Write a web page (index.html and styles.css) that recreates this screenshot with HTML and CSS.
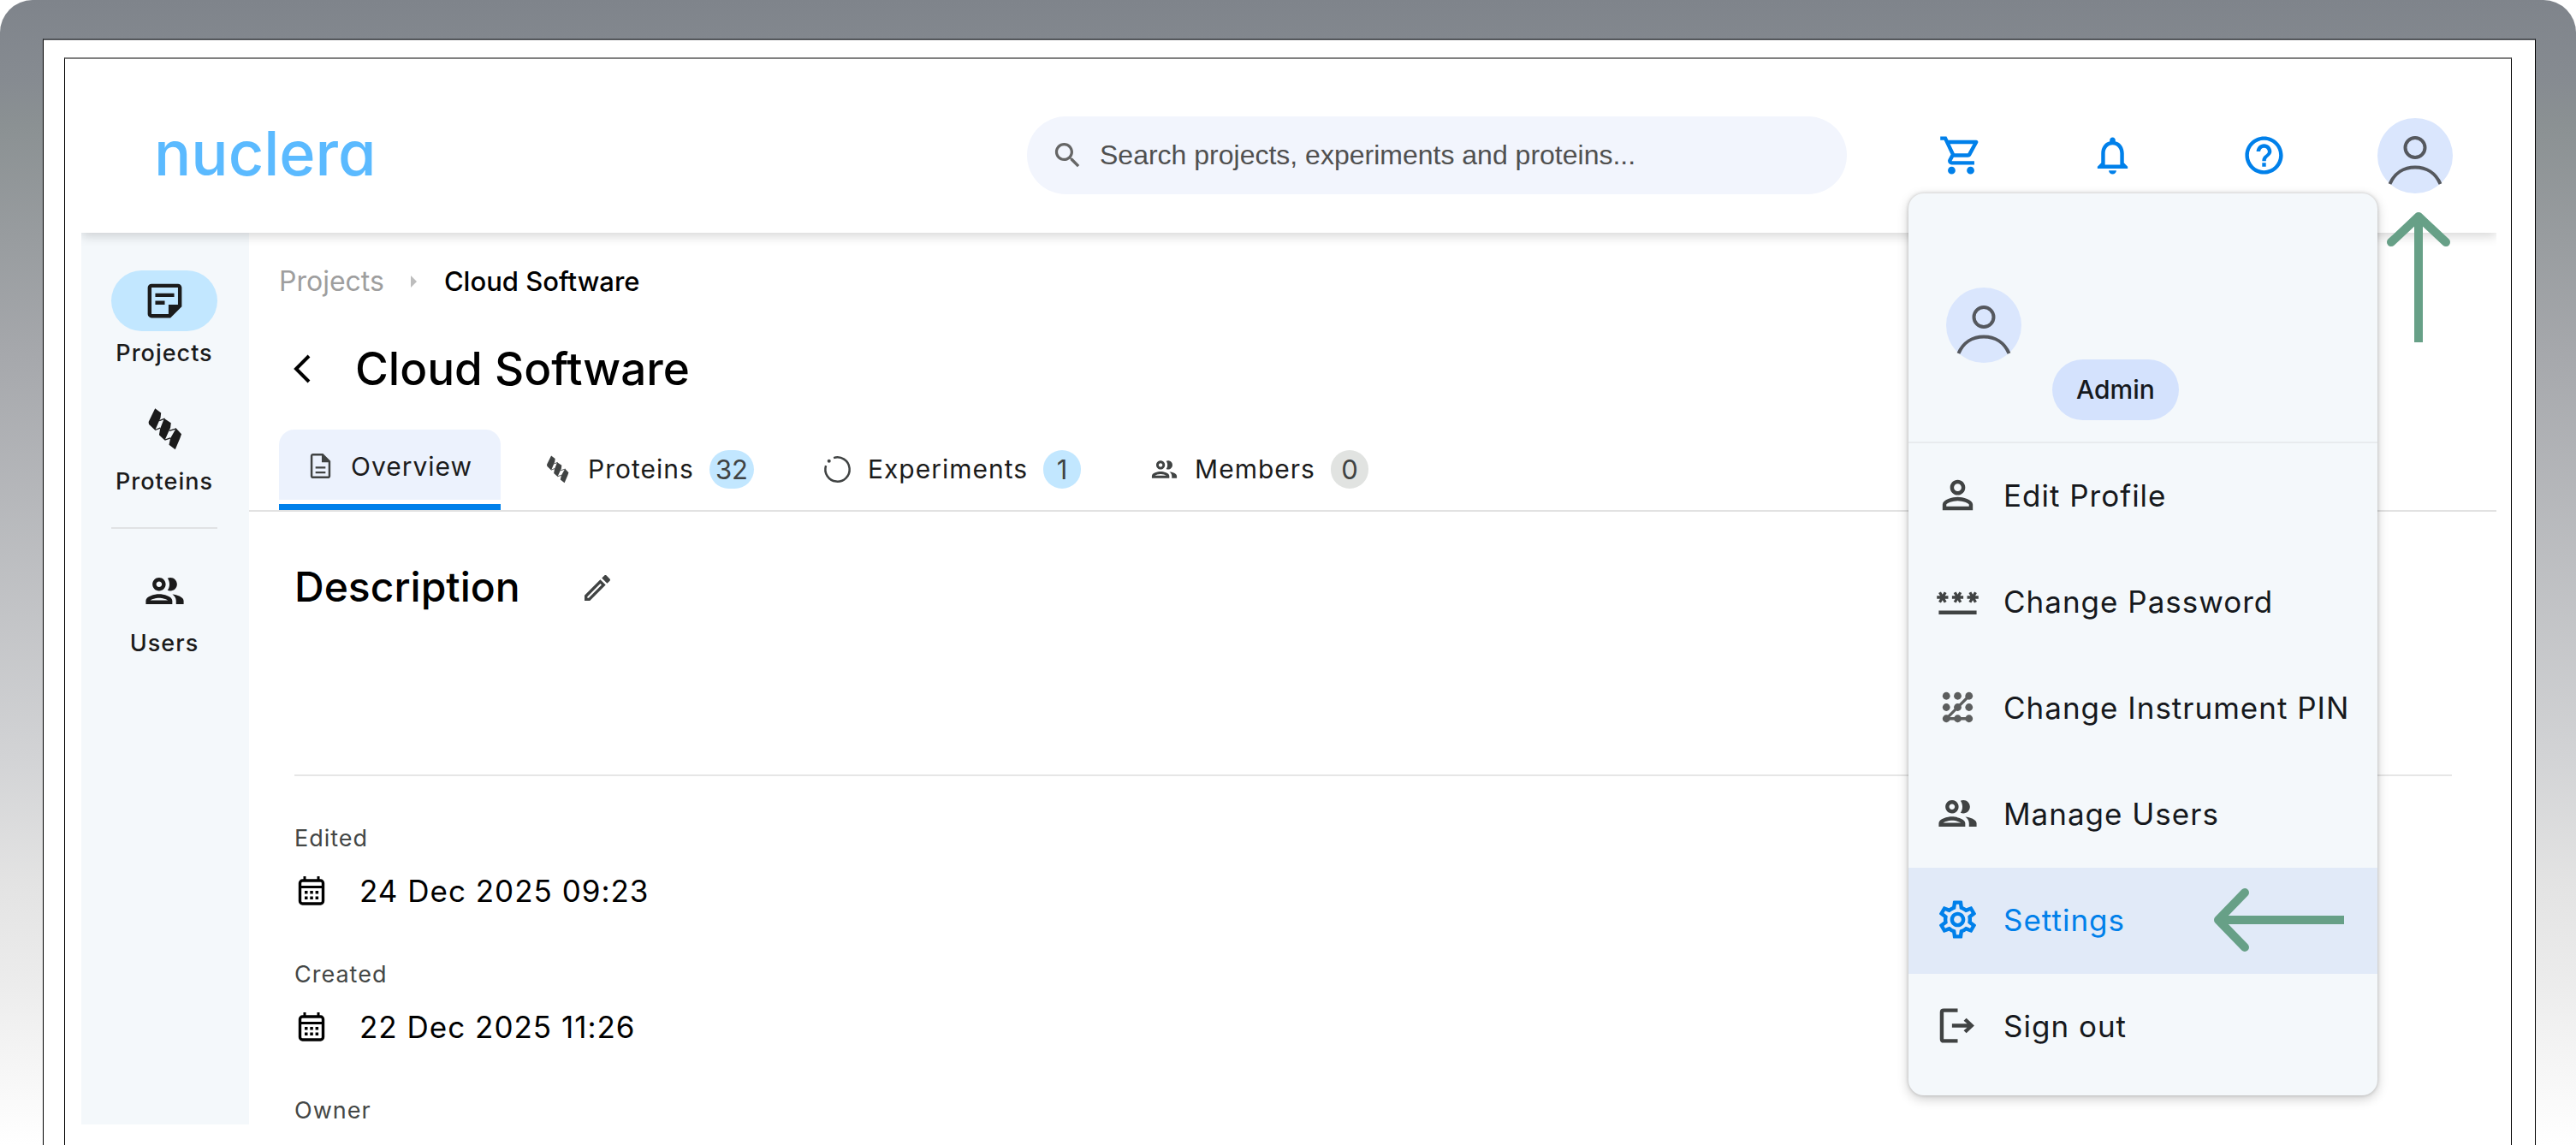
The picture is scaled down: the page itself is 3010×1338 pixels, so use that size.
FILE: index.html
```html
<!DOCTYPE html>
<html lang="en">
<head>
  <meta charset="UTF-8">
  <title>Cloud Software - nuclera</title>
  <link rel="stylesheet" href="styles.css">
</head>
<body>
  <!-- shared icons -->
  <svg class="sprite" aria-hidden="true">
    <symbol id="icon-group" viewBox="0 0 24 24"><path d="M9 13.75c-2.34 0-7 1.17-7 3.5V19h14v-1.75c0-2.33-4.66-3.5-7-3.5zM4.34 17c.84-.58 2.87-1.25 4.66-1.25s3.82.67 4.66 1.25H4.34zM9 12c1.93 0 3.5-1.57 3.5-3.5S10.93 5 9 5 5.5 6.57 5.5 8.5 7.07 12 9 12zm0-5c.83 0 1.5.67 1.5 1.5S9.83 10 9 10s-1.5-.67-1.5-1.5S8.17 7 9 7zm7.04 6.81c1.16.84 1.96 1.96 1.96 3.44V19h4v-1.75c0-2.02-3.5-3.17-5.96-3.44zM15 12c1.93 0 3.5-1.57 3.5-3.5S16.93 5 15 5c-.54 0-1.04.13-1.5.35.63.89 1 1.98 1 3.15s-.37 2.26-1 3.15c.46.22.96.35 1.5.35z"/></symbol>
    <symbol id="icon-protein" viewBox="0 0 132 160">
      <path d="M32 7L53 23L51 40L32 84L10 63L9 54ZM64 42L88 58L86 75L66 119L46 100L50 78ZM106 77L125 97L120 112L103 152L81 135L86 112Z"/>
      <path d="M47 50L66 43M32 83L50 76M82 86L107 78M66 118L86 111" fill="none" stroke="currentColor" stroke-width="4"/>
    </symbol>
    <symbol id="icon-calendar" viewBox="0 0 40 40">
      <rect x="6.500" y="8" width="27" height="27" rx="3" fill="none" stroke="currentColor" stroke-width="3.400"/>
      <path d="M6 15.500h28M12 3v5M28 3v5" fill="none" stroke="currentColor" stroke-width="3"/>
      <path d="M12 20h3.500v3.500H12zM18.300 20h3.500v3.500h-3.500zM24.600 20h3.500v3.500h-3.500zM12 26.500h3.500V30H12zM18.300 26.500h3.500V30h-3.500zM24.600 26.500h3.500V30h-3.500z"/>
    </symbol>
    <symbol id="icon-avatar" viewBox="0 0 88 88">
      <circle cx="44" cy="34.500" r="11.500" fill="none" stroke="currentColor" stroke-width="4"/>
      <path d="M14.500 77C20 64 31 57.500 44 57.500S68 64 73.500 77" fill="none" stroke="currentColor" stroke-width="4"/>
    </symbol>
  </svg>

  <div class="device">
    <div class="bezel">
      <div class="app">
        <header class="topbar">
          <a class="logo" href="#">nuclera</a>
          <label class="search">
            <svg class="icon-search" viewBox="0 0 24 24"><path d="M15.5 14h-.79l-.28-.27C15.41 12.59 16 11.11 16 9.5 16 5.91 13.09 3 9.500 3S3 5.910 3 9.500 5.910 16 9.500 16c1.610 0 3.090-.59 4.230-1.570l.27.28v.79l5 4.990L20.490 19l-4.990-5zm-6 0C7.010 14 5 11.990 5 9.500S7.010 5 9.500 5 14 7.010 14 9.500 11.990 14 9.500 14z"/></svg>
            <input type="search" aria-label="Search" placeholder="Search projects, experiments and proteins...">
          </label>
          <button type="button" class="top-button" aria-label="Cart">
            <svg class="icon" viewBox="0 0 24 24"><path d="M15.55 13c.75 0 1.410-.41 1.750-1.030l3.580-6.490c.37-.66-.11-1.480-.87-1.480H5.210l-.94-2H1v2h2l3.600 7.590-1.350 2.440C4.520 15.370 5.480 17 7 17h12v-2H7l1.100-2h7.450zM6.160 6h12.150l-2.760 5H8.530L6.160 6zM7 18c-1.100 0-1.990.9-1.990 2S5.900 22 7 22s2-.9 2-2-.9-2-2-2zm10 0c-1.100 0-1.990.9-1.990 2s.89 2 1.990 2 2-.9 2-2-.9-2-2-2z"/></svg>
          </button>
          <button type="button" class="top-button" aria-label="Notifications">
            <svg class="icon" viewBox="0 0 24 24"><path d="M12 22c1.100 0 2-.9 2-2h-4c0 1.100.9 2 2 2zm6-6v-5c0-3.070-1.630-5.640-4.500-6.320V4c0-.83-.67-1.500-1.500-1.500s-1.500.67-1.500 1.500v.68C7.640 5.360 6 7.920 6 11v5l-2 2v1h16v-1l-2-2zm-2 1H8v-6c0-2.480 1.510-4.500 4-4.500s4 2.020 4 4.500v6z"/></svg>
          </button>
          <button type="button" class="top-button" aria-label="Help">
            <svg class="icon" viewBox="0 0 24 24"><path d="M11 18h2v-2h-2v2zm1-16C6.480 2 2 6.480 2 12s4.480 10 10 10 10-4.480 10-10S17.520 2 12 2zm0 18c-4.410 0-8-3.590-8-8s3.590-8 8-8 8 3.590 8 8-3.590 8-8 8zm0-14c-2.210 0-4 1.790-4 4h2c0-1.100.9-2 2-2s2 .9 2 2c0 2-3 1.750-3 5h2c0-2.250 3-2.500 3-5 0-2.210-1.790-4-4-4z"/></svg>
          </button>
          <div class="account">
            <button type="button" class="avatar" aria-label="Account"><svg><use href="#icon-avatar"/></svg></button>
            <svg class="arrow-up" viewBox="0 0 80 156"><path d="M40 10v144" stroke-width="10"/><path d="M8 37L40 7L72 37" stroke-width="10" stroke-linecap="round" stroke-linejoin="round"/></svg>

            <div class="menu">
              <div class="menu-head">
                <span class="avatar"><svg><use href="#icon-avatar"/></svg></span>
                <span class="role">Admin</span>
              </div>
              <a class="menu-item" href="#">
                <svg class="icon" viewBox="0 0 24 24"><path fill-rule="evenodd" d="M12 6c1.100 0 2 .9 2 2s-.9 2-2 2-2-.9-2-2 .9-2 2-2m0 9c2.700 0 5.800 1.290 6 2v1H6v-.99c.2-.72 3.300-2.010 6-2.010m0-11C9.790 4 8 5.790 8 8s1.790 4 4 4 4-1.790 4-4-1.790-4-4-4zm0 9c-2.670 0-8 1.340-8 4v3h16v-3c0-2.660-5.330-4-8-4z"/></svg>
                Edit Profile
              </a>
              <a class="menu-item" href="#">
                <svg class="icon" viewBox="0 0 24 24"><path d="M2 17h20v2H2v-2zm1.150-4.050L4 11.470l.85 1.480 1.300-.75-.85-1.480H7v-1.500H5.300l.85-1.470L4.850 7 4 8.470 3.150 7l-1.300.75.85 1.470H1v1.500h1.700l-.85 1.480 1.300.75zm6.700-.75l1.300.75.85-1.480.85 1.480 1.300-.75-.85-1.480H15v-1.500h-1.700l.85-1.470-1.300-.75L12 8.470 11.150 7l-1.300.75.85 1.470H9v1.500h1.700l-.85 1.480zM23 9.220h-1.700l.85-1.470-1.300-.75L20 8.470 19.150 7l-1.300.75.85 1.470H17v1.500h1.700l-.85 1.480 1.300.75.85-1.480.85 1.480 1.300-.75-.85-1.480H23v-1.500z"/></svg>
                Change Password
              </a>
              <a class="menu-item" href="#">
                <svg class="icon icon-pin" viewBox="0 0 24 24"><circle cx="6" cy="6" r="2"/><circle cx="12" cy="6" r="2"/><circle cx="18" cy="6" r="2"/><circle cx="6" cy="12" r="2"/><circle cx="12" cy="12" r="2"/><circle cx="18" cy="12" r="2"/><circle cx="6" cy="18" r="2"/><circle cx="12" cy="18" r="2"/><circle cx="18" cy="18" r="2"/><path d="M18 6L6 18h12" fill="none" stroke="currentColor" stroke-width="1.500"/></svg>
                Change Instrument PIN
              </a>
              <a class="menu-item" href="#">
                <svg class="icon"><use href="#icon-group"/></svg>
                Manage Users
              </a>
              <a class="menu-item active" href="#">
                <svg class="icon" viewBox="0 0 24 24"><path d="M19.43 12.98c.04-.32.07-.64.07-.98 0-.34-.03-.66-.07-.98l2.11-1.65c.19-.15.24-.42.12-.64l-2-3.46c-.09-.16-.26-.25-.44-.25-.06 0-.12.01-.17.03l-2.49 1c-.52-.4-1.08-.73-1.69-.98l-.38-2.65C14.46 2.18 14.25 2 14 2h-4c-.25 0-.46.18-.49.42l-.38 2.65c-.61.25-1.17.59-1.69.98l-2.49-1c-.06-.02-.12-.03-.18-.03-.17 0-.34.09-.43.25l-2 3.46c-.13.22-.07.49.12.64l2.11 1.65c-.04.32-.07.65-.07.98 0 .33.03.66.07.98l-2.11 1.65c-.19.15-.24.42-.12.64l2 3.46c.09.16.26.25.44.25.06 0 .12-.01.17-.03l2.49-1c.52.4 1.08.73 1.69.98l.38 2.65c.03.24.24.42.49.42h4c.25 0 .46-.18.49-.42l.38-2.65c.61-.25 1.17-.59 1.69-.98l2.49 1c.06.02.12.03.18.03.17 0 .34-.09.43-.25l2-3.46c.12-.22.07-.49-.12-.64l-2.11-1.65zm-1.98-1.71c.04.31.05.52.05.73 0 .21-.02.43-.05.73l-.14 1.13.89.7 1.08.84-.7 1.21-1.27-.51-1.04-.42-.9.68c-.43.32-.84.56-1.25.73l-1.06.43-.16 1.13-.2 1.35h-1.4l-.19-1.35-.16-1.13-1.06-.43c-.43-.18-.83-.41-1.23-.71l-.91-.7-1.06.43-1.27.51-.7-1.21 1.08-.84.89-.7-.14-1.13c-.03-.31-.05-.54-.05-.74s.02-.43.05-.73l.14-1.13-.89-.7-1.08-.84.7-1.21 1.27.51 1.04.42.9-.68c.43-.32.84-.56 1.25-.73l1.06-.43.16-1.13.2-1.35h1.39l.19 1.35.16 1.13 1.06.43c.43.18.83.41 1.23.71l.91.7 1.06-.43 1.27-.51.7 1.21-1.07.85-.89.7.14 1.13zM12 8c-2.21 0-4 1.79-4 4s1.79 4 4 4 4-1.79 4-4-1.79-4-4-4zm0 6c-1.1 0-2-.9-2-2s.9-2 2-2 2 .9 2 2-.9 2-2 2z"/></svg>
                Settings
                <svg class="arrow-left" viewBox="0 0 156 80"><path d="M10 40h144" stroke-width="10"/><path d="M38 8L7 40L38 72" stroke-width="10" stroke-linecap="round" stroke-linejoin="round"/></svg>
              </a>
              <a class="menu-item" href="#">
                <svg class="icon" viewBox="0 0 24 24"><path d="M12 3.900H4.600q-1 0-1 1v14.200q0 1 1 1H12" fill="none" stroke="currentColor" stroke-width="2"/><path d="M16.600 8l-1.400 1.400L17 11H9v2h8l-1.800 1.600 1.400 1.400 4.200-4z"/></svg>
                Sign out
              </a>
            </div>
          </div>
        </header>

        <div class="body">
          <nav class="sidebar">
            <a class="nav-item active" href="#">
              <span class="nav-icon"><svg class="icon" viewBox="0 0 24 24"><path d="M19 5v9h-5v5H5V5h14m0-2H5c-1.100 0-2 .9-2 2v14c0 1.100.9 2 2 2h10l6-6V5c0-1.100-.9-2-2-2zm-7 11H7v-2h5v2zm5-4H7V8h10v2z"/></svg></span>
              Projects
            </a>
            <a class="nav-item" href="#">
              <span class="nav-icon"><svg class="icon"><use href="#icon-protein"/></svg></span>
              Proteins
            </a>
            <hr class="nav-line">
            <a class="nav-item" href="#">
              <span class="nav-icon"><svg class="icon"><use href="#icon-group"/></svg></span>
              Users
            </a>
          </nav>

          <main class="main">
            <div class="breadcrumb">
              <a href="#">Projects</a>
              <svg class="crumb-arrow" viewBox="0 0 8 14"><path d="M0 0l7 7-7 7z"/></svg>
              <span>Cloud Software</span>
            </div>

            <div class="title-row">
              <button type="button" class="back" aria-label="Back"><svg viewBox="0 0 20 34"><path d="M18 2L3 17L18 32" fill="none" stroke="currentColor" stroke-width="4"/></svg></button>
              <h1>Cloud Software</h1>
            </div>

            <div class="tabs">
              <button type="button" class="tab active">
                <svg class="tab-icon" viewBox="0 0 24 24"><path d="M8 16.500h8V18H8zm0-4h8V14H8zM14 2H6c-1.100 0-2 .9-2 2v16c0 1.100.89 2 1.990 2H18c1.100 0 2-.9 2-2V8l-6-6zm4.300 18.300H5.700V3.700H13V9h5.300v11.300z"/></svg>
                Overview
              </button>
              <button type="button" class="tab">
                <svg class="tab-icon"><use href="#icon-protein"/></svg>
                Proteins <span class="badge">32</span>
              </button>
              <button type="button" class="tab">
                <svg class="tab-icon" viewBox="0 0 24 24"><path d="M9 2.800A9.700 9.700 0 1 1 2.800 9" fill="none" stroke="currentColor" stroke-width="1.700"/><circle cx="5.300" cy="5.300" r="1.400"/></svg>
                Experiments <span class="badge">1</span>
              </button>
              <button type="button" class="tab">
                <svg class="tab-icon"><use href="#icon-group"/></svg>
                Members <span class="badge empty">0</span>
              </button>
            </div>

            <section class="overview">
              <div class="description">
                <h2>Description</h2>
                <button type="button" class="edit" aria-label="Edit description"><svg viewBox="0 0 24 24"><path d="M14.060 9.020l.92.92L5.920 19H5v-.92l9.060-9.060M17.660 3c-.25 0-.51.1-.7.29l-1.830 1.830 3.750 3.750 1.830-1.830c.39-.39.39-1.020 0-1.410l-2.340-2.340c-.2-.2-.45-.29-.71-.29zm-3.600 3.190L3 17.250V21h3.750L17.810 9.940l-3.750-3.750z"/></svg></button>
              </div>
              <dl class="details">
                <div class="detail">
                  <dt>Edited</dt>
                  <dd><svg class="calendar"><use href="#icon-calendar"/></svg>24 Dec 2025 09:23</dd>
                </div>
                <div class="detail">
                  <dt>Created</dt>
                  <dd><svg class="calendar"><use href="#icon-calendar"/></svg>22 Dec 2025 11:26</dd>
                </div>
                <div class="detail">
                  <dt>Owner</dt>
                </div>
              </dl>
            </section>
          </main>
        </div>
      </div>
    </div>
  </div>
</body>
</html>
```

FILE: styles.css
```css
* {
  box-sizing: border-box;
}
body {
  margin: 0;
  background: #fff;
  color: #000;
  font-family: Inter, "Liberation Sans", sans-serif;
  font-size: 31px;
  font-optical-sizing: none;
}
svg {
  display: block;
  fill: currentColor;
  flex-shrink: 0;
}
a {
  color: inherit;
  text-decoration: none;
}
button {
  padding: 0;
  border: none;
  background: none;
  color: inherit;
  font: inherit;
  letter-spacing: inherit;
  cursor: pointer;
}
h1, h2, dl, dd {
  margin: 0;
}
.sprite {
  display: none;
}

/* device frame */
.device {
  display: flex;
  min-height: 100vh;
  padding: 45px 47px 0 50px;
  border-radius: 38px 38px 0 0;
  background: linear-gradient(#7f848b 0%, #868b91 7%, #8b9193 11%, #a6a8ac 31%, #d2d3d5 66%, #e3e3e3 77%, #ececec 86%, #fff 100%);
}
.bezel {
  display: flex;
  flex: 1;
  padding: 20px 27px 0 24px;
  background: #fff;
  border: 1px solid #000;
  border-top: 2px solid #55585c;
  border-bottom: none;
}
.app {
  display: flex;
  flex: 1;
  flex-direction: column;
  padding: 0 17px 24px 19px;
  border: 1px solid #000;
  border-top: 2px solid #808080;
  border-bottom: none;
}

/* top bar */
.topbar {
  display: flex;
  align-items: center;
  gap: 89px;
  position: relative;
  z-index: 1;
  height: 203px;
  padding: 22px 51px 0 85px;
  background: #fff;
  box-shadow: 0 4px 12px rgba(0, 0, 0, 0.16);
  clip-path: inset(0 0 -1200px 0);
}
.logo {
  margin-right: auto;
  padding-bottom: 6px;
  color: #5bbaff;
  font-size: 72px;
  font-weight: 500;
  line-height: 88px;
  font-feature-settings: "cv11";
}
.search {
  display: flex;
  flex: 0 1 958px;
  align-items: center;
  gap: 18px;
  height: 91px;
  padding: 0 28px;
  border-radius: 46px;
  background: #f2f5fd;
}
.icon-search {
  width: 39px;
  height: 39px;
  color: #666;
}
.search input {
  flex: 1;
  min-width: 0;
  padding: 0;
  border: none;
  outline: none;
  background: none;
  color: #444;
  font-family: "Liberation Sans", Arial, sans-serif;
  font-size: 32px;
}
.search input::placeholder {
  color: #505050;
  opacity: 1;
}
.top-button {
  display: flex;
  justify-content: center;
  width: 88px;
  color: #0080ea;
}
.icon {
  width: 53px;
  height: 53px;
}
.account {
  position: relative;
}
.avatar {
  display: block;
  width: 88px;
  height: 88px;
  border-radius: 50%;
  background: #dae6fd;
  color: #55585e;
}
.avatar svg {
  width: 88px;
  height: 88px;
}
.arrow-up, .arrow-left {
  fill: none;
  stroke: #67a087;
}
.arrow-up {
  position: absolute;
  top: 108px;
  left: 8px;
  width: 80px;
  height: 156px;
}
.arrow-left {
  width: 156px;
  height: 80px;
  margin-left: auto;
}

/* account menu */
.menu {
  position: absolute;
  top: 88px;
  right: 88px;
  width: 548px;
  padding-bottom: 18px;
  border-radius: 18px;
  background: #f4f8fb;
  box-shadow: 0 4px 14px rgba(0, 0, 0, 0.2), 0 0 4px rgba(0, 0, 0, 0.2);
}
.menu-head {
  display: flex;
  gap: 36px;
  height: 292px;
  padding: 110px 44px 0;
  border-bottom: 2px solid #e8ebee;
}
.role {
  align-self: flex-end;
  margin-bottom: 25px;
  padding: 0 28px;
  border-radius: 36px;
  background: #d4e2fd;
  color: #16191d;
  font-size: 30px;
  font-weight: 500;
  line-height: 71px;
}
.menu-item {
  display: flex;
  align-items: center;
  gap: 27px;
  height: 124px;
  padding: 0 37px 2px 31px;
  color: #16191d;
  font-size: 35px;
  white-space: nowrap;
  letter-spacing: 1px;
}
.menu-item .icon {
  color: #404343;
}
.menu-item .icon-pin {
  color: #5c5e5e;
}
.menu-item.active {
  background: #e1eaf8;
  color: #0080ea;
}
.menu-item.active .icon {
  color: #0080ea;
}

/* side navigation */
.body {
  display: flex;
  flex: 1;
}
.sidebar {
  width: 196px;
  padding: 44px 37px 0 35px;
  background: #f4f8fb;
}
.nav-item {
  display: block;
  margin-bottom: 28px;
  color: #1b1b1b;
  font-size: 27px;
  font-weight: 500;
  line-height: 51px;
  text-align: center;
  letter-spacing: 1px;
}
.nav-icon {
  display: flex;
  align-items: center;
  justify-content: center;
  height: 71px;
  border-radius: 36px;
}
.nav-item.active .nav-icon {
  background: #c2e7ff;
}
.nav-line {
  margin: 0 0 37px;
  border: none;
  border-top: 2px solid #e0e2e4;
}

/* project page */
.main {
  flex: 1;
  padding-top: 34px;
}
.breadcrumb {
  display: flex;
  align-items: center;
  gap: 31px;
  padding-left: 35px;
  font-weight: 500;
  line-height: 46px;
}
.breadcrumb a {
  color: #9e9e9e;
  font-size: 32px;
  font-weight: 400;
}
.crumb-arrow {
  width: 8px;
  height: 14px;
  color: #bdbdbd;
}
.title-row {
  display: flex;
  align-items: center;
  gap: 52px;
  margin-top: 49px;
  padding-left: 52px;
}
.back svg {
  width: 20px;
  height: 34px;
}
h1 {
  font-size: 53px;
  font-weight: 500;
  line-height: 60px;
}
.tabs {
  display: flex;
  gap: 18px;
  margin-top: 41px;
  padding-left: 35px;
  border-bottom: 2px solid #e2e2e2;
}
.tab {
  display: flex;
  align-items: center;
  gap: 18px;
  height: 94px;
  padding: 0 31px 2px;
  color: #1b1b1b;
  font-size: 30px;
  letter-spacing: 1px;
}
.tab.active {
  padding-right: 33px;
  border-bottom: 7px solid #0080ea;
  background: linear-gradient(#ecf2fd, #ecf2fd) no-repeat 0 0 / 100% 82px;
  clip-path: inset(0 round 18px 18px 0 0);
}
.tab-icon {
  width: 35px;
  height: 35px;
  color: #404343;
}
.badge {
  min-width: 44px;
  padding: 0 7px;
  border-radius: 23px;
  background: #c2e7ff;
  color: #404343;
  font-size: 31px;
  line-height: 45px;
  letter-spacing: 0;
}
.badge.empty {
  background: #e1e3e1;
}
.overview {
  padding: 58px 52px 0 53px;
}
.description {
  display: flex;
  align-items: flex-start;
  gap: 70px;
  height: 251px;
  border-bottom: 2px solid #e6e6e6;
}
h2 {
  font-size: 48px;
  font-weight: 500;
  line-height: 60px;
}
.edit {
  padding: 11px 0;
}
.edit svg {
  width: 40px;
  height: 40px;
  color: #404343;
}
.details {
  padding-top: 57px;
}
.detail {
  margin-bottom: 59px;
}
.detail:last-child {
  margin-bottom: 0;
}
dt {
  color: #444746;
  font-size: 27px;
  line-height: 32px;
  letter-spacing: 1px;
}
dd {
  display: flex;
  align-items: center;
  gap: 36px;
  margin-top: 22px;
  font-size: 35px;
  line-height: 46px;
  letter-spacing: 1px;
}
.calendar {
  width: 40px;
  height: 40px;
}
```
